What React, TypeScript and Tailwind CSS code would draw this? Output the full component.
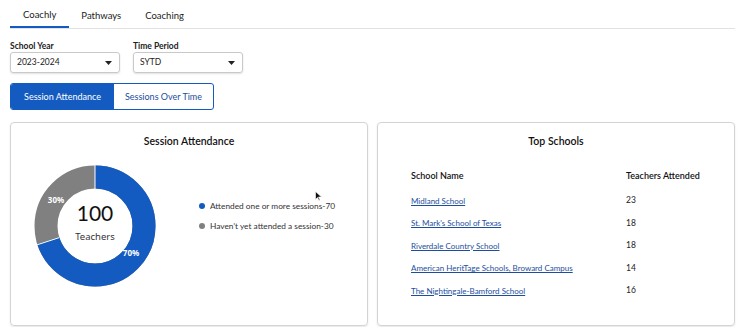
const schools = [
  { name: "Midland School", count: 23 },
  { name: "St. Mark's School of Texas", count: 18 },
  { name: "Riverdale Country School", count: 18 },
  { name: "American HeritTage Schools, Broward Campus", count: 14 },
  { name: "The Nightingale-Bamford School", count: 16 },
]

function Select({ label, value, width }: { label: string; value: string; width: string }) {
  return (
    <div className={`flex flex-col ${width}`}>
      <span className="text-[8.5px] font-bold text-[#222] leading-[12px]">{label}</span>
      <div className="flex h-[21px] items-center justify-between rounded-[3px] border border-[#c9c9c9] pl-[6px] pr-[7px] shadow-[0_1px_2px_rgba(0,0,0,0.12)]">
        <span className="text-[8.5px] text-[#222]">{value}</span>
        <svg width="7" height="4" viewBox="0 0 7 4">
          <path d="M0 0h7L3.5 4z" fill="#222" />
        </svg>
      </div>
    </div>
  )
}

function Donut() {
  const r = 49
  const c = 2 * Math.PI * r
  const blue = c * 0.7
  const a = (108 * Math.PI) / 180
  return (
    <div className="relative h-[122px] w-[122px]">
      <svg width="122" height="122" viewBox="0 0 122 122">
        <g transform="rotate(-90 61 61)">
          <circle cx="61" cy="61" r={r} fill="none" stroke="#808080" strokeWidth="23" />
          <circle
            cx="61"
            cy="61"
            r={r}
            fill="none"
            stroke="#135bc1"
            strokeWidth="23"
            strokeDasharray={`${blue} ${c}`}
          />
        </g>
        <line x1="61" y1="0" x2="61" y2="24" stroke="#fff" strokeWidth="1" />
        <line
          x1={61 - 37.5 * Math.sin(a)}
          y1={61 - 37.5 * Math.cos(a)}
          x2={61 - 61 * Math.sin(a)}
          y2={61 - 61 * Math.cos(a)}
          stroke="#fff"
          strokeWidth="1"
        />
        <text x="22" y="38" fill="#fff" fontSize="8" fontWeight="700" textAnchor="middle" fontFamily="'Noto Sans', sans-serif">
          30%
        </text>
        <text x="97" y="91" fill="#fff" fontSize="8" fontWeight="700" textAnchor="middle" fontFamily="'Noto Sans', sans-serif">
          70%
        </text>
      </svg>
      <div className="absolute inset-0 flex flex-col items-center justify-center">
        <span className="mt-[-6px] text-[21px] leading-[22px] text-[#111]">100</span>
        <span className="mt-[6px] font-['Noto_Sans',sans-serif] text-[9.5px] text-[#333]">Teachers</span>
      </div>
    </div>
  )
}

export default function App() {
  return (
    <div className="h-[327px] w-[740px] overflow-hidden bg-white pl-[10px] pr-[5px] font-['Lato',sans-serif]">
      <div className="flex h-[29px] border-b border-[#e2e2e2]">
        <div className="flex items-center border-b-2 border-[#135bc1] px-[13px] pt-[4px] text-[9.5px] text-[#222]">Coachly</div>
        <div className="flex items-center px-[12px] pt-[4px] text-[9.5px] text-[#222]">Pathways</div>
        <div className="flex items-center px-[12px] pt-[4px] text-[9.5px] text-[#222]">Coaching</div>
      </div>

      <div className="mt-[11px] flex gap-[13px]">
        <Select label="School Year" value="2023-2024" width="w-[110px]" />
        <Select label="Time Period" value="SYTD" width="w-[110px]" />
      </div>

      <div className="mt-[10px] flex h-[27px] w-[204px] overflow-hidden rounded-[3px] border border-[#135bc1]">
        <div className="flex w-[103px] items-center justify-center bg-[#135bc1] text-[9px] text-white">Session Attendance</div>
        <div className="flex flex-1 items-center justify-center text-[9px] text-[#1d4e9e]">Sessions Over Time</div>
      </div>

      <div className="mt-[12px] flex gap-[9px]">
        <div className="relative h-[204px] w-[358px] rounded-[4px] border border-[#d4d4d4] shadow-[0_1px_2px_rgba(0,0,0,0.1)]">
          <div className="pt-[11px] text-center text-[10.5px] font-semibold text-[#111]">Session Attendance</div>
          <div className="mt-[15px] flex items-center pl-[23px]">
            <Donut />
            <div className="ml-[43px] mt-[-19px] flex flex-col gap-[8px] text-[8.3px] text-[#333]">
              <div className="flex items-center gap-[5px]">
                <span className="h-[6px] w-[6px] rounded-full bg-[#135bc1]" />
                Attended one or more sessions-70
              </div>
              <div className="flex items-center gap-[5px]">
                <span className="h-[6px] w-[6px] rounded-full bg-[#808080]" />
                Haven’t yet attended a session-30
              </div>
            </div>
          </div>
          <svg className="absolute left-[304px] top-[68px]" width="7" height="10" viewBox="0 0 7 10">
            <path d="M0.5 0.5v8l2-2 1.5 3 1-0.5-1.5-3h3z" fill="#111" stroke="#fff" strokeWidth="0.6" />
          </svg>
        </div>

        <div className="h-[204px] w-[358px] rounded-[4px] border border-[#d4d4d4] shadow-[0_1px_2px_rgba(0,0,0,0.1)]">
          <div className="pt-[11px] text-center text-[10.5px] font-semibold text-[#111]">Top Schools</div>
          <div className="mt-[19px] pl-[33px]">
            <div className="flex text-[9px] font-semibold text-[#111]">
              <span className="w-[215px]">School Name</span>
              <span>Teachers Attended</span>
            </div>
            <div className="mt-[12px] flex flex-col gap-[10px] text-[8px]">
              {schools.map((s) => (
                <div key={s.name} className="flex h-[12.5px] items-center">
                  <a className="w-[215px] text-[#1d4e9e] underline">{s.name}</a>
                  <span className="text-[8.5px] text-[#222]">{s.count}</span>
                </div>
              ))}
            </div>
          </div>
        </div>
      </div>
    </div>
  )
}
